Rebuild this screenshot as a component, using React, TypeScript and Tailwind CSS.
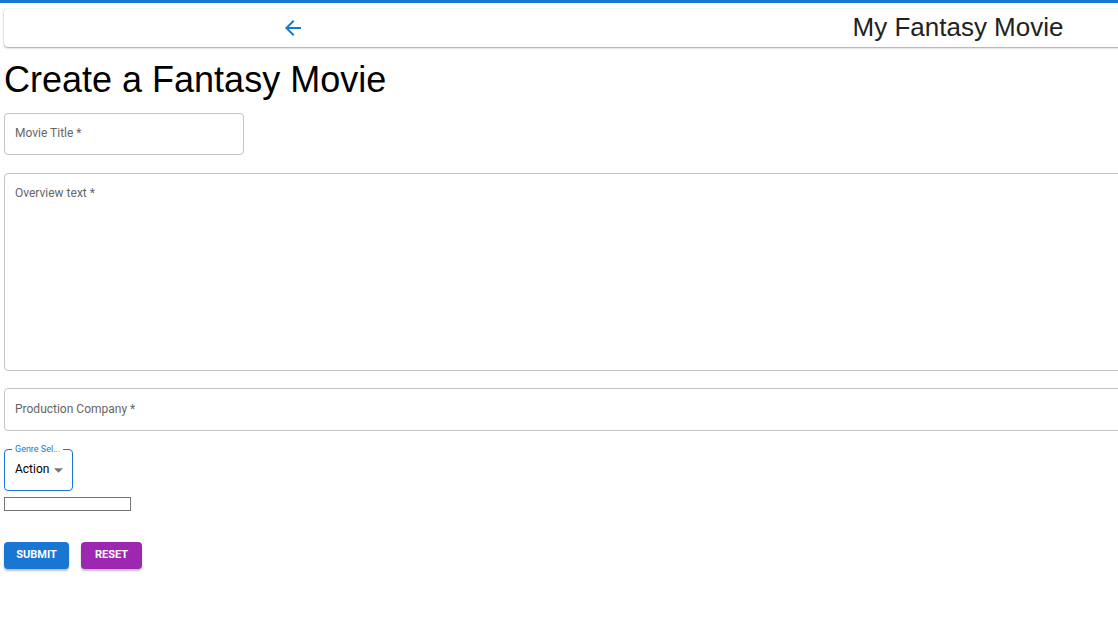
import React from "react";

function Field({ label, w, h, top = false }: { label: string; w: string; h: string; top?: boolean }) {
  return (
    <div className={`${w} ${h} border border-[#c4c4c4] rounded-[4px] px-[10px] ${top ? "pt-[5px]" : "flex items-center pb-[2px]"}`}>
      <span className="text-[12px] text-[#666666] font-['Roboto',sans-serif]">{label} *</span>
    </div>
  );
}

export default function App() {
  return (
    <div className="w-[1118px] h-[621px] overflow-hidden bg-white">
      <div className="h-[3px] bg-[#1976d2] w-full" />
      <div className="w-[1340px] pl-[4px]">
        <div className="mt-[6px] h-[38px] grid grid-cols-[578px_752px] items-center bg-white rounded-[4px] shadow-[0_1px_2px_rgba(0,0,0,0.35),0_0_1px_rgba(0,0,0,0.2)]">
          <div className="flex justify-center">
            <svg width="24" height="24" viewBox="0 0 24 24" fill="#1976d2">
              <path d="M20 11H7.83l5.59-5.59L12 4l-8 8 8 8 1.41-1.41L7.83 13H20v-2z" />
            </svg>
          </div>
          <div className="text-center text-[26px] text-[#222] font-['Liberation_Sans',Arial,sans-serif] leading-none -mt-[2px]">My Fantasy Movie</div>
        </div>
        <h1 className="mt-[12px] text-[36px] leading-[42px] text-black font-['Liberation_Sans',Arial,sans-serif]">Create a Fantasy Movie</h1>
        <div className="mt-[12px] flex flex-col">
          <Field label="Movie Title" w="w-[240px]" h="h-[42px]" />
          <div className="mt-[18px]">
            <Field label="Overview text" w="w-[1300px]" h="h-[198px]" top />
          </div>
          <div className="mt-[17px]">
            <Field label="Production Company" w="w-[1300px]" h="h-[43px]" />
          </div>
          <div className="mt-[18px] relative w-[69px] h-[42px] border border-[#1976d2] rounded-[4px] flex items-center pl-[10px] pb-[2px] font-['Roboto',sans-serif]">
            <span className="absolute left-[7px] -top-[7px] bg-white px-[3px] text-[9px] leading-[12px] text-[#1976d2]">Genre Sel...</span>
            <span className="text-[12px] text-black">Action</span>
            <svg className="ml-[5px] mt-[2px]" width="9" height="5" viewBox="0 0 10 5" fill="#777">
              <path d="M0 0l5 5 5-5z" />
            </svg>
          </div>
          <div className="mt-[6px] w-[127px] h-[14px] border border-[#767676]" />
          <div className="mt-[31px] flex gap-[12px] font-['Roboto',sans-serif]">
            <button className="w-[65px] h-[27px] rounded-[4px] bg-[#1976d2] text-white text-[11px] font-bold shadow-[0_2px_2px_rgba(0,0,0,0.25)]">SUBMIT</button>
            <button className="w-[61px] h-[27px] rounded-[4px] bg-[#9c27b0] text-white text-[11px] font-bold shadow-[0_2px_2px_rgba(0,0,0,0.25)]">RESET</button>
          </div>
        </div>
      </div>
    </div>
  );
}
